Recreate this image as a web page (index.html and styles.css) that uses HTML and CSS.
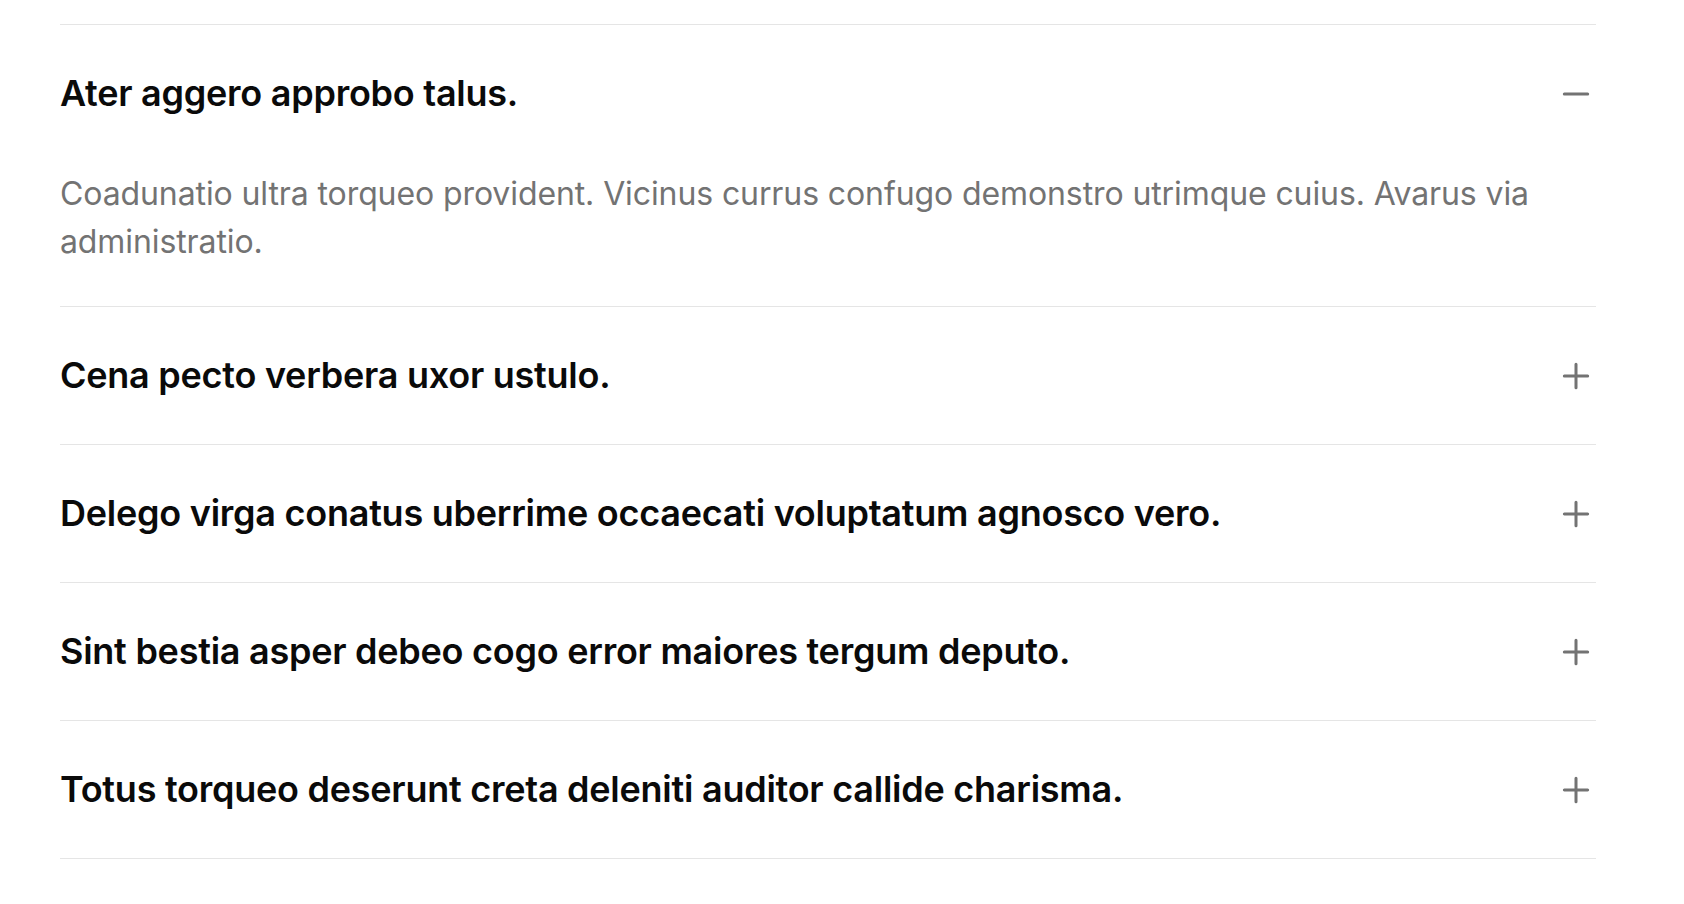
FILE: index.html
```html
<!DOCTYPE html>
<html lang="la">
<head>
<meta charset="utf-8">
<title>FAQ</title>
<link rel="stylesheet" href="styles.css">
</head>
<body>
<main class="page">
  <section class="faq">
    <div class="item open">
      <div class="question">
        <h3 class="q-text">Ater aggero approbo talus.</h3>
        <svg class="icon" viewBox="0 0 24 24"><path d="M5 12h14"/></svg>
      </div>
      <p class="answer">Coadunatio ultra torqueo provident. Vicinus currus confugo demonstro utrimque cuius. Avarus via administratio.</p>
    </div>
    <div class="item">
      <div class="question">
        <h3 class="q-text">Cena pecto verbera uxor ustulo.</h3>
        <svg class="icon" viewBox="0 0 24 24"><path d="M5 12h14M12 5v14"/></svg>
      </div>
    </div>
    <div class="item">
      <div class="question">
        <h3 class="q-text">Delego virga conatus uberrime occaecati voluptatum agnosco vero.</h3>
        <svg class="icon" viewBox="0 0 24 24"><path d="M5 12h14M12 5v14"/></svg>
      </div>
    </div>
    <div class="item">
      <div class="question">
        <h3 class="q-text">Sint bestia asper debeo cogo error maiores tergum deputo.</h3>
        <svg class="icon" viewBox="0 0 24 24"><path d="M5 12h14M12 5v14"/></svg>
      </div>
    </div>
    <div class="item">
      <div class="question">
        <h3 class="q-text">Totus torqueo deserunt creta deleniti auditor callide charisma.</h3>
        <svg class="icon" viewBox="0 0 24 24"><path d="M5 12h14M12 5v14"/></svg>
      </div>
    </div>
  </section>
</main>
</body>
</html>
```

FILE: styles.css
```css
* { box-sizing: border-box; }
html, body { margin: 0; padding: 0; background: #ffffff; }
body { font-family: Inter, "Noto Sans", sans-serif; color: #0a0a0a; }
.page { padding: 24px 88px 0 60px; }
.faq { border-top: 1px solid #e5e5e5; }
.item { border-bottom: 1px solid #e5e5e5; }
.question {
  display: flex;
  align-items: center;
  justify-content: space-between;
  padding: 48px 0;
  gap: 24px;
}
.q-text {
  margin: 0;
  font-size: 36px;
  line-height: 41px;
  font-weight: 600;
  letter-spacing: -0.25px;
}
.icon {
  width: 40px;
  height: 40px;
  flex: none;
  fill: none;
  stroke: #737373;
  stroke-width: 1.8;
  stroke-linecap: round;
}
.answer {
  margin: 0;
  padding: 8px 0 40px 0;
  font-size: 32px;
  line-height: 48px;
  letter-spacing: -0.1px;
  color: #737373;
}
```
